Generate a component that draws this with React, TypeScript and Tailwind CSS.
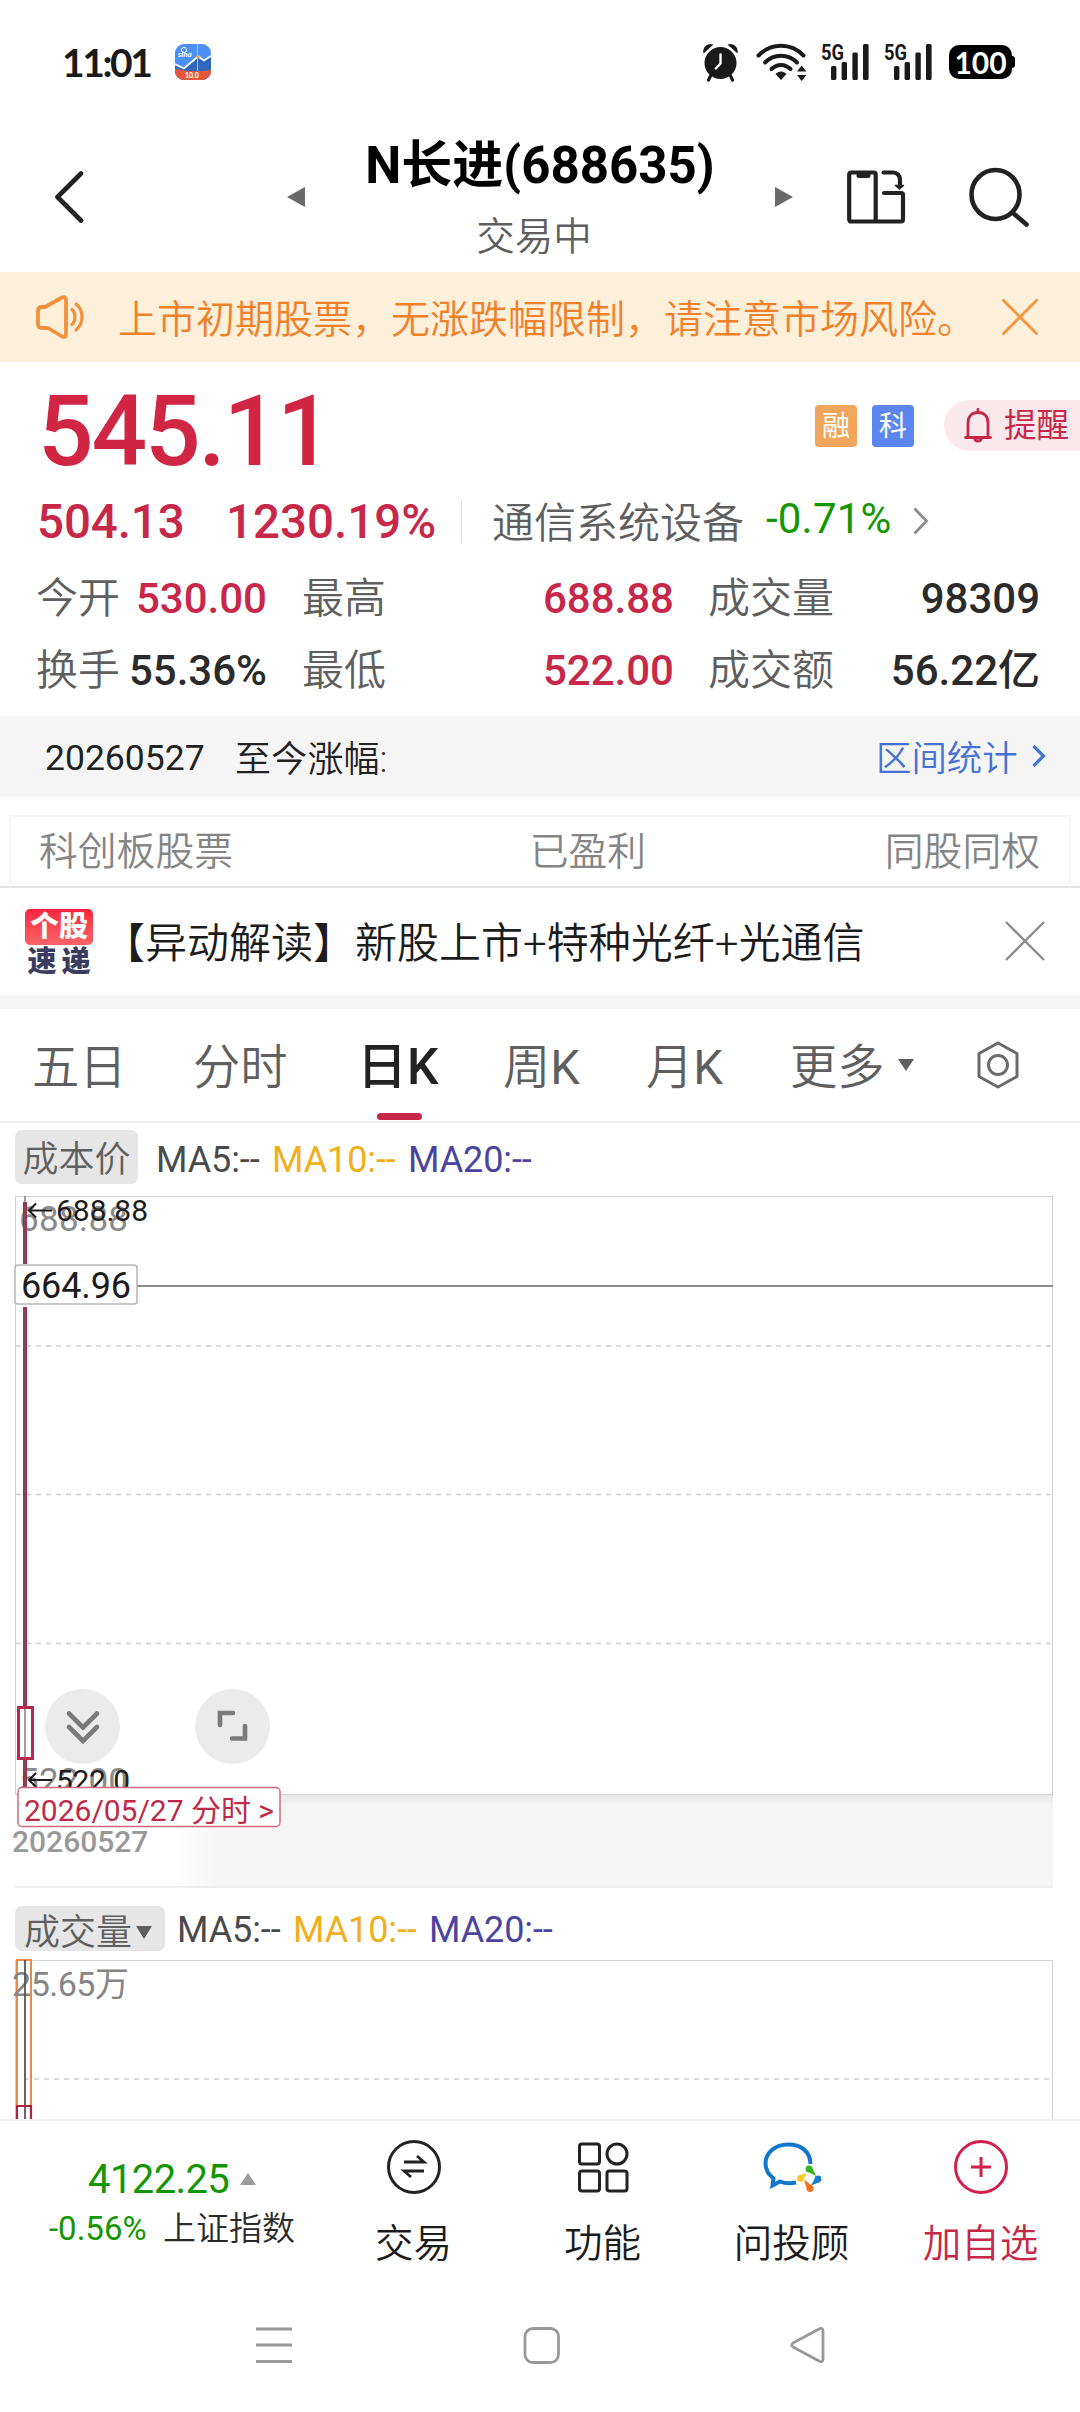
import React from 'react';

interface StatProps {
  label: string;
  value: string;
  className: string;
  up?: boolean;
}

interface MaLegendProps {
  className?: string;
}

const stats: StatProps[][] = [
  [
    { label: '今开', value: '530.00', className: 'w-[231px]', up: true },
    { label: '最高', value: '688.88', className: 'ml-[35px] w-[372px]', up: true },
    { label: '成交量', value: '98309', className: 'ml-[34px] w-[332px]' },
  ],
  [
    { label: '换手', value: '55.36%', className: 'w-[231px]' },
    { label: '最低', value: '522.00', className: 'ml-[35px] w-[372px]', up: true },
    { label: '成交额', value: '56.22亿', className: 'ml-[34px] w-[332px]' },
  ],
];

const Stat: React.FC<StatProps> = ({ label, value, className, up }) => (
  <div className={`flex items-center justify-between ${className}`}>
    <span className="pt-[4px] text-[42px] font-[350] text-[#5f5f5f]">{label}</span>
    <span className={`pt-[3px] text-[42px] font-medium ${up ? 'text-[#c72748]' : 'text-[#2b2b2b]'}`}>{value}</span>
  </div>
);

const MaLegend: React.FC<MaLegendProps> = ({ className }) => (
  <div className={`flex text-[36px] tracking-[-0.1px] ${className}`}>
    <span className="w-[116px] text-[#4a4a4a]">MA5:--</span>
    <span className="w-[136px] text-[#efb01c]">MA10:--</span>
    <span className="text-[#4a43a0]">MA20:--</span>
  </div>
);

const Signal = () => (
  <svg className="overflow-visible" width="48" height="38" viewBox="0 0 48 38" fill="#1a1a1a">
    <text x="0" y="16.5" fontSize="22" fontWeight="700" fontFamily="Roboto" textLength="23" lengthAdjust="spacingAndGlyphs">5G</text>
    <rect x="10" y="23" width="5.4" height="14" rx="1.5" />
    <rect x="20.6" y="19" width="5.4" height="18" rx="1.5" />
    <rect x="31.4" y="9.5" width="5.4" height="27.5" rx="1.5" />
    <rect x="42" y="1" width="5.6" height="36" rx="1.5" />
  </svg>
);

const StatusBar = () => (
  <div className="flex h-[124px] items-center pl-[62px]">
    <span className="w-[113px] font-['Lato'] text-[39px] font-bold tracking-[-2.4px] text-[#1a1a1a]">11:01</span>
    <svg width="36" height="36" viewBox="0 0 36 36">
      <defs>
        <clipPath id="app-clip"><rect width="36" height="36" rx="9" /></clipPath>
      </defs>
      <g clipPath="url(#app-clip)">
        <rect width="36" height="36" fill="#4a90f5" />
        <path d="M0 22 L9 25 L23 13 L29 17 L36 12 V36 H0Z" fill="#2f68bd" />
        <path d="M0 20 L9 24.5 L23 12.5 L29 16.5 L36 12" fill="none" stroke="#fff" strokeWidth="1.8" />
        <path d="M22.5 0V27" stroke="#b9d4f8" strokeWidth="0.8" />
        <path d="M0 25 Q18 29 36 26 V36 H0Z" fill="#e8553a" />
        <circle cx="23" cy="13" r="1.8" fill="#f2a33c" />
        <circle cx="9" cy="6" r="2.6" fill="none" stroke="#fff" strokeWidth="1" />
        <text x="3" y="13" fontSize="8" fontWeight="700" fontStyle="italic" fill="#fff" fontFamily="Lato">sina</text>
        <text x="10" y="34" fontSize="7" fontWeight="900" fill="#fff" fontFamily="Lato">10.0</text>
      </g>
    </svg>
    <svg className="ml-[491px]" width="38" height="40" viewBox="0 0 38 40">
      <circle cx="18.5" cy="21" r="16" fill="#1a1a1a" />
      <path d="M18.5 12.5V21.5L13.8 26.5" fill="none" stroke="#fff" strokeWidth="2.4" strokeLinecap="round" />
      <path d="M1.5 11.5C0 5 6 0 11.5 2.6ZM35.5 11.5C37 5 31 0 25.5 2.6Z" fill="#1a1a1a" />
      <path d="M8.5 34L6.5 38M28.5 34L30.5 38" stroke="#1a1a1a" strokeWidth="3.2" strokeLinecap="round" />
    </svg>
    <svg className="ml-[16px]" width="52" height="40" viewBox="0 0 52 40">
      <g fill="none" stroke="#1a1a1a" strokeWidth="4" strokeLinecap="round">
        <path d="M2.5 13.5C15 0.5 35 0.5 47.5 13.5" />
        <path d="M9 20.5C18 11.5 32 11.5 41 20.5" />
        <path d="M15.5 27C21 21.5 29 21.5 34.5 27" />
      </g>
      <path d="M19.5 32C22.5 28.5 27.5 28.5 30.5 32L25 38Z" fill="#1a1a1a" />
      <path d="M41 29.5L45.7 23.5L50.4 29.5ZM41 33L45.7 39L50.4 33Z" fill="#1a1a1a" />
    </svg>
    <div className="ml-[13px] flex gap-[15px]">
      <Signal />
      <Signal />
    </div>
    <div className="ml-[17px] flex h-[34px] w-[63px] items-center justify-center rounded-[10px] bg-black font-['Lato'] text-[30px] font-bold leading-none text-white">100</div>
    <div className="h-[12px] w-[3px] rounded-r-[3px] bg-black" />
  </div>
);

const Header = () => (
  <div className="flex h-[148px] items-center pb-[2px] pl-[54px]">
    <svg width="30" height="54" viewBox="0 0 30 54" fill="none" stroke="#222" strokeWidth="4.6" strokeLinecap="round" strokeLinejoin="round">
      <path d="M27 3.5L3.5 27L27 50.5" />
    </svg>
    <svg className="ml-[203px]" width="18" height="20" viewBox="0 0 18 20">
      <path d="M18 0V20L0 10Z" fill="#6a6a6a" />
    </svg>
    <div className="flex w-[470px] flex-col items-center">
      <h1 className="text-[51px] font-bold leading-[58px] text-black">N长进(688635)</h1>
      <p className="mr-[12px] mt-[22px] text-[38.5px] font-[350] leading-[40px] text-[#5f5f5f]">交易中</p>
    </div>
    <svg width="18" height="20" viewBox="0 0 18 20">
      <path d="M0 0V20L18 10Z" fill="#6a6a6a" />
    </svg>
    <svg className="ml-[54px]" width="60" height="54" viewBox="0 0 60 54" fill="none" stroke="#222" strokeWidth="4.2" strokeLinecap="round" strokeLinejoin="round">
      <rect x="2.2" y="2.5" width="26.5" height="49" rx="2" />
      <path d="M28.7 51.5H54a2 2 0 0 0 2-2V25a2 2 0 0 0-2-2H37" />
      <path d="M36.5 2.5H46a7 7 0 0 1 7 7V15" />
      <path d="M48.5 15.5h8L52.5 19z" fill="#222" strokeWidth="1.5" />
      <path d="M12 5.5H21" strokeWidth="5" />
    </svg>
    <svg className="ml-[62px]" width="62" height="62" viewBox="0 0 62 62" fill="none" stroke="#222" strokeWidth="4.6" strokeLinecap="round">
      <ellipse cx="26.5" cy="28.5" rx="24" ry="24.5" />
      <path d="M44 47L57.5 58.5" />
    </svg>
  </div>
);

const Notice = () => (
  <div className="flex h-[90px] items-center bg-[#fdf0da] pl-[34px]">
    <svg width="52" height="46" viewBox="0 0 52 46" fill="none" stroke="#f4903c" strokeWidth="3.8" strokeLinecap="round" strokeLinejoin="round">
      <path d="M11 13L28 3.5Q32 2 32 6V40Q32 44 28 42.5L14 34H8Q4 34 4 30V17Q4 13 8 13Z" />
      <path d="M38 15.5C42 19 42 27 38 30.5" strokeWidth="3.2" />
      <path d="M42 10C50 17 50 29 42 36" strokeWidth="3.2" />
    </svg>
    <span className="ml-[32px] w-[884px] whitespace-nowrap pt-[6px] text-[39px] font-[350] text-[#f0802a]">上市初期股票，无涨跌幅限制，请注意市场风险。</span>
    <svg width="36" height="36" viewBox="0 0 36 36" stroke="#f4963e" strokeWidth="3">
      <path d="M0.5 0.5L35.5 35.5M35.5 0.5L0.5 35.5" />
    </svg>
  </div>
);

const Quote = () => (
  <div className="h-[354px] pl-[36px]">
    <div className="flex h-[135px] items-center">
      <span className="w-[779px] pl-[2px] pt-[4px] text-[98px] font-medium leading-none tracking-[-2.2px] text-[#d02543]">545.11</span>
      <div className="mb-2 flex items-center">
        <span className="flex h-[42px] w-[42px] items-center justify-center rounded-[4px] bg-[#f2a55c] pt-[3px] text-[28px] leading-none text-white">融</span>
        <span className="ml-[15px] flex h-[42px] w-[42px] items-center justify-center rounded-[4px] bg-[#5b86f0] pt-[3px] text-[28px] leading-none text-white">科</span>
        <div className="ml-[30px] flex h-[51px] w-[136px] items-center rounded-l-full bg-[#f9e8ec] pl-[20px]">
          <svg width="28" height="36" viewBox="0 0 28 36" fill="none" stroke="#c72748" strokeWidth="2.8" strokeLinecap="round">
            <path d="M4 29V15C4 8 8 4.5 14 4.5S24 8 24 15V29M1.5 29.5H26.5M14 1.5V4" />
            <path d="M10.5 30C11 34 17 34 17.5 30" />
          </svg>
          <span className="ml-[12px] whitespace-nowrap pt-[2px] text-[32.5px] leading-none text-[#c72748]">提醒</span>
        </div>
      </div>
    </div>
    <div className="flex h-[48px] items-center text-[47.5px] font-medium leading-none text-[#c72748]">
      <span className="w-[190px] pl-[1px] pt-[3px] tracking-[-0.1px]">504.13</span>
      <span className="w-[235px] pt-[3px]">1230.19%</span>
      <span className="h-[43px] w-px bg-[#dcdcdc]" />
      <span className="ml-[30px] w-[274px] pt-[5px] text-[42px] font-[350] text-[#5f5f5f]">通信系统设备</span>
      <span className="mb-[5px] w-[147px] text-[42px] font-normal tracking-[0.2px] text-[#149600]">-0.71%</span>
      <svg width="16" height="28" viewBox="0 0 16 28" fill="none" stroke="#8c8c8c" strokeWidth="2.8">
        <path d="M1.5 1.5L13.5 14L1.5 26.5" />
      </svg>
    </div>
    <div className="mt-[16px]">
      {stats.map((row, i) => (
        <div key={i} className="flex h-[72px] items-center leading-none">
          {row.map((item) => (
            <Stat key={item.label} {...item} />
          ))}
        </div>
      ))}
    </div>
  </div>
);

const RangeBar = () => (
  <div className="flex h-[81px] items-center bg-[#f5f5f5] pl-[45px] pt-[4px] text-[36px] text-[#222]">
    <span className="w-[190px] text-[35.5px]">20260527</span>
    <span className="w-[641px] pt-[3px] font-[350] tracking-[0.2px]">至今涨幅:</span>
    <span className="w-[156px] pt-[2px] text-[35.4px] font-[350] text-[#4672d6]">区间统计</span>
    <svg className="mb-[5px]" width="14" height="22" viewBox="0 0 14 22" fill="none" stroke="#4672d6" strokeWidth="3.2">
      <path d="M1.5 1L11.5 11L1.5 21" />
    </svg>
  </div>
);

const Features = () => (
  <div className="h-[91px] border-b-2 border-[#e4e4e4] px-[9px] pt-[18px]">
    <div className="grid h-[69px] grid-cols-3 items-center border-2 border-[#f6f6f6] pl-[28px] pr-[29px] pt-[6px] text-[38.8px] font-[350] text-[#858585]">
      <span>科创板股票</span>
      <span className="pl-[157px]">已盈利</span>
      <span className="text-right">同股同权</span>
    </div>
  </div>
);

const NewsRow = () => (
  <div className="flex h-[121px] items-center border-b-[14px] border-[#f5f5f5] pl-[25px]">
    <div className="flex w-[68px] flex-col items-center whitespace-nowrap pt-[4px] font-black">
      <span className="flex h-[36px] w-[68px] items-center justify-center rounded-[5px] bg-gradient-to-b from-[#f5203f] to-[#fb6268] text-[29px] leading-none text-white">个股</span>
      <span className="mt-[1px] flex gap-[5px] text-[29px] leading-[32px] text-[#3c3c60]"><span>速</span><span>递</span></span>
    </div>
    <span className="ml-[10px] w-[902px] whitespace-nowrap pt-[3px] text-[42px] font-[350] text-[#1c1c1c]">【异动解读】新股上市+特种光纤+光通信</span>
    <svg className="mb-[2px]" width="40" height="40" viewBox="0 0 40 40" stroke="#8c8c8c" strokeWidth="2.4">
      <path d="M1 1L39 39M39 1L1 39" />
    </svg>
  </div>
);

const Tabs = () => (
  <div className="flex h-[114px] items-center border-b-2 border-[#efefef] pl-[32px] text-[47.3px] font-[350] text-[#5f5f5f]">
    <span className="w-[161px] pt-[7px]">五日</span>
    <span className="w-[164px] pt-[7px]">分时</span>
    <div className="relative w-[146px] pt-[5px] text-[50px] font-medium text-[#222]">
      日K
      <span className="absolute -bottom-[15px] left-[20px] h-[7px] w-[45px] rounded-full bg-[#c72748]" />
    </div>
    <span className="w-[143px] pt-[7px]">周<span className="font-normal">K</span></span>
    <span className="w-[144px] pt-[7px]">月<span className="font-normal">K</span></span>
    <span className="w-[108px] pt-[7px]">更多</span>
    <svg width="16" height="12" viewBox="0 0 16 12"><path d="M0 0H16L8 12Z" fill="#5f5f5f" /></svg>
    <svg className="ml-[63px]" width="42" height="48" viewBox="0 0 42 48" fill="none" stroke="#6a6a6a" strokeWidth="3">
      <path d="M21 2L40 12.5V35.5L21 46L2 35.5V12.5Z" strokeLinejoin="round" />
      <circle cx="21" cy="24" r="9.5" />
    </svg>
  </div>
);

const KLineChart = () => (
  <svg className="block font-['Roboto','Noto_Sans_CJK_SC',sans-serif]" width="1080" height="696" viewBox="0 1195 1080 696">
    <defs>
      <linearGradient id="axis-fade" x1="0" x2="1" y1="0" y2="0">
        <stop offset="0" stopColor="#f5f5f5" stopOpacity="0" />
        <stop offset="0.05" stopColor="#f5f5f5" />
        <stop offset="1" stopColor="#f5f5f5" />
      </linearGradient>
      <linearGradient id="axis-shadow" x1="0" x2="0" y1="0" y2="1">
        <stop offset="0" stopColor="#e6e6e6" />
        <stop offset="1" stopColor="#e6e6e6" stopOpacity="0" />
      </linearGradient>
    </defs>
    <rect x="175" y="1795" width="878" height="92" fill="url(#axis-fade)" />
    <rect x="270" y="1795" width="783" height="10" fill="url(#axis-shadow)" />
    <rect x="15.5" y="1196.5" width="1037" height="598" fill="none" stroke="#d2d2d2" />
    <path d="M15 1887H1053" stroke="#ededed" strokeWidth="2" />
    <path d="M16 1346H1052M16 1494.5H1052M16 1643.5H1052" stroke="#cfcfcf" strokeWidth="1.5" strokeDasharray="5 5" />
    <text x="19" y="1231" fontSize="35" fill="#8a8a8a" textLength="109">688.88</text>
    <text x="19" y="1793" fontSize="35" fill="#8a8a8a" textLength="109">522.00</text>
    {/* candle */}
    <path d="M25 1202V1264M25 1307V1706M25 1760V1788" stroke="#a82a4c" strokeWidth="4" />
    <path d="M25 1196V1264M25 1307V1788" stroke="#6d5860" strokeWidth="1.2" />
    <rect x="18.5" y="1707.5" width="14" height="51" fill="none" stroke="#b8284a" strokeWidth="3" />
    {/* high / low marks */}
    <g fill="#1c1c1c" stroke="none" fontSize="30">
      <text x="56" y="1221" textLength="92">688.88</text>
      <text x="56" y="1791" textLength="74">522.0</text>
    </g>
    <path d="M52 1210.5H29M36 1203.5L29 1210.5L36 1217.5M52 1780H29M36 1773L29 1780L36 1787" fill="none" stroke="#1c1c1c" strokeWidth="2" />
    {/* crosshair price */}
    <path d="M137 1286H1053" stroke="#8c8c8c" strokeWidth="2" />
    <rect x="15" y="1265" width="122" height="39" rx="3" fill="#fff" stroke="#b5b5b5" strokeWidth="1.5" />
    <text x="21" y="1298" fontSize="36" fill="#1c1c1c" textLength="110">664.96</text>
    <circle cx="82.5" cy="1726.5" r="37.5" fill="#ebebeb" />
    <circle cx="232.5" cy="1726.5" r="37.5" fill="#ebebeb" />
    <g fill="none" stroke="#7a7a7a" strokeWidth="4.6" strokeLinecap="round">
      <path d="M69 1713.5L83 1727.5L97 1713.5M69 1727L83 1741L97 1727" />
      <path d="M220 1725V1713H233M245 1726V1738.5H232" />
    </g>
    <rect x="18" y="1787.5" width="262" height="39" rx="4" fill="#fff" stroke="#cc6a82" strokeWidth="1.5" />
    <text x="24" y="1821" fontSize="30" fill="#c02a4a" textLength="250">2026/05/27 分时 &gt;</text>
    <text x="12" y="1852" fontSize="30" fontWeight="500" fill="#999">20260527</text>
  </svg>
);

const VolumeChart = () => (
  <svg className="block font-['Roboto','Noto_Sans_CJK_SC',sans-serif]" width="1080" height="161" viewBox="0 1958 1080 161">
    <path d="M15.5 2119V1960.5H1052.5V2119" fill="none" stroke="#d2d2d2" />
    <path d="M24 2079H1052" stroke="#cfcfcf" strokeWidth="1.5" strokeDasharray="5 5" />
    <path d="M17 2119V1960H31V2119" fill="none" stroke="#e58a50" strokeWidth="2" />
    <text x="12" y="1996" fontSize="34" fill="#858585" textLength="117">25.65万</text>
    <path d="M25 1960V2119" stroke="#555" strokeWidth="1.8" />
    <path d="M17 2119V2106H31V2119" fill="none" stroke="#a8273f" strokeWidth="2.2" />
  </svg>
);

const BottomBar = () => (
  <div className="flex h-[159px] border-t-2 border-[#f2f2f2] text-[38.5px] text-[#1c1c1c]">
    <div className="w-[319px] pt-[36px]">
      <div className="flex h-[44px] items-center pl-[88px] text-[40px] leading-none text-[#149600]">
        <span className="w-[152px] pt-[2px] tracking-[-0.6px]">4122.25</span>
        <svg width="16" height="12" viewBox="0 0 16 12"><path d="M0 12H16L8 0Z" fill="#9a9a9a" /></svg>
      </div>
      <div className="mt-[5px] flex h-[44px] items-center pl-[49px] text-[33px] leading-none">
        <span className="w-[114px] text-[#149600]">-0.56%</span>
        <span className="font-[350] text-[#2b2b2b]">上证指数</span>
      </div>
    </div>
    <div className="grid w-[756px] grid-cols-4 font-[350]">
      <div className="flex flex-col items-center pt-[18px]">
        <svg width="56" height="56" viewBox="0 0 56 56" fill="none" stroke="#222" strokeWidth="3">
          <circle cx="28" cy="28" r="25.5" />
          <path d="M18 23H38L31 17M38 32H18L25 38" strokeWidth="2.8" />
        </svg>
        <span className="mt-[23px] leading-[52px]">交易</span>
      </div>
      <div className="flex flex-col items-center pt-[18px]">
        <svg width="56" height="56" viewBox="0 0 56 56" fill="none" stroke="#222" strokeWidth="3">
          <rect x="4.5" y="5" width="20" height="20" rx="2.5" />
          <circle cx="42" cy="15" r="10" />
          <rect x="4.5" y="32" width="20" height="20" rx="2.5" />
          <rect x="32" y="32" width="20" height="20" rx="2.5" />
        </svg>
        <span className="mt-[23px] leading-[52px]">功能</span>
      </div>
      <div className="flex flex-col items-center pt-[18px]">
        <svg width="60" height="56" viewBox="0 0 60 56">
          <path d="M48.5 25C48 12 39 5.5 26 5.5C13 5.5 3.5 14 3.5 24.5C3.5 31 7 36 11.5 39.5L10.5 46.5L18 42.5C23 44.5 29 44.5 34 43.5" fill="none" stroke="#1177cc" strokeWidth="4" />
          <circle cx="47" cy="30" r="3.4" fill="#37b21f" />
          <path d="M44.5 32L50 28L54 37Z" fill="#37b21f" />
          <circle cx="56" cy="40" r="3.4" fill="#1b7bd0" />
          <path d="M54 37.5L58 43L49 46.5Z" fill="#1b7bd0" />
          <circle cx="48" cy="49.5" r="3.4" fill="#f2711c" />
          <path d="M45 50.5L50.5 47L42 40.5Z" fill="#f2711c" />
          <circle cx="38.5" cy="39.5" r="3.4" fill="#fbc926" />
          <path d="M36.5 37L41 42L44.5 33.5Z" fill="#fbc926" />
        </svg>
        <span className="mt-[23px] leading-[52px]">问投顾</span>
      </div>
      <div className="flex flex-col items-center pt-[18px] text-[#c72748]">
        <svg width="56" height="56" viewBox="0 0 56 56" fill="none" stroke="#d2204c" strokeWidth="3">
          <circle cx="28" cy="28" r="25.5" />
          <path d="M28 18V38M18 28H38" />
        </svg>
        <span className="mt-[23px] leading-[52px]">加自选</span>
      </div>
    </div>
  </div>
);

const SystemNav = () => (
  <div className="flex h-[134px] items-center pl-[256px]">
    <svg width="36" height="40" viewBox="0 0 36 40" stroke="#999" strokeWidth="3">
      <path d="M0 4H36M0 20H36M0 36.5H36" />
    </svg>
    <svg className="ml-[231px]" width="38" height="40" viewBox="0 0 38 40" fill="none" stroke="#999" strokeWidth="2.8">
      <rect x="2" y="3.5" width="33.5" height="34" rx="8" />
    </svg>
    <svg className="ml-[229px]" width="36" height="40" viewBox="0 0 36 40" fill="none" stroke="#999" strokeWidth="2.8" strokeLinejoin="round">
      <path d="M3 18Q0.5 20 3 22L29 36Q33 38 33 34V6Q33 2 29 4Z" />
    </svg>
  </div>
);

export default function App() {
  return (
    <div className="h-[2412px] w-[1080px] overflow-hidden bg-white font-['Roboto','Noto_Sans_CJK_SC',sans-serif]">
      <StatusBar />
      <Header />
      <Notice />
      <Quote />
      <RangeBar />
      <Features />
      <NewsRow />
      <Tabs />
      <div className="flex h-[72px] items-start pl-[15px] pt-[7px]">
        <span className="flex h-[54px] w-[123px] items-center justify-center rounded-[7px] bg-[#e6e6e6] pt-[6px] text-[36px] font-[350] text-[#5f5f5f]">成本价</span>
        <MaLegend className="ml-[18px] h-[54px] items-center pt-[5px]" />
      </div>
      <KLineChart />
      <div className="flex h-[67px] items-start pl-[15px] pt-[15px]">
        <span className="flex h-[45px] w-[150px] items-center rounded-[7px] bg-[#e6e6e6] pl-[9px] pt-[8px] text-[36px] font-[350] leading-none text-[#5f5f5f]">
          成交量
          <svg className="ml-[4px]" width="16" height="13" viewBox="0 0 16 13"><path d="M0 0H16L8 13Z" fill="#5f5f5f" /></svg>
        </span>
        <MaLegend className="ml-[12px] h-[46px] items-center pt-[2px]" />
      </div>
      <VolumeChart />
      <BottomBar />
      <SystemNav />
    </div>
  );
}
